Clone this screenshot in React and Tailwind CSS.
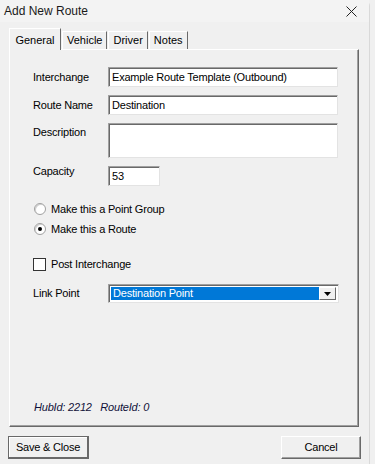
import React from "react";

const tabs = ["General", "Vehicle", "Driver", "Notes"];

const sunken =
  "bg-white border border-t-[#a0a0a0] border-l-[#a0a0a0] border-r-[#e3e3e3] border-b-[#e3e3e3] shadow-[inset_1px_1px_0_#696969]";

const Field = ({ label, value, className = "" }) => (
  <div className="flex items-center mt-[8px]">
    <span className="w-[75px] shrink-0">{label}</span>
    <div className={`${sunken} h-[20px] w-[230px] flex items-center pl-[3px] ${className}`}>
      {value}
    </div>
  </div>
);

const Radio = ({ label, checked }) => (
  <div className="flex items-center h-[20px]">
    <span className="w-[12px] h-[12px] rounded-full border border-[#a0a0a0] bg-white flex items-center justify-center ml-[1px] shadow-[inset_1px_1px_0_#d0d0d0]">
      {checked && <span className="w-[4px] h-[4px] rounded-full bg-black" />}
    </span>
    <span className="ml-[5px]">{label}</span>
  </div>
);

export default function App() {
  return (
    <div className="w-[375px] h-[464px] bg-[#f0f0f0] font-['Liberation_Sans',Arial,sans-serif] text-[11px] text-black overflow-hidden">
      <div className="w-[370px] h-full border-r border-[#d9d9d9] rounded-tr-[6px] flex flex-col">
        {/* title bar */}
        <div className="h-[22px] bg-[#f3f3f3] flex items-center justify-between pl-[4px] pr-[12px] text-[12px] text-[#1a1a1a]">
          <span>Add New Route</span>
          <svg width="11" height="11" viewBox="0 0 11 11">
            <path d="M0.5 0.5 L10.5 10.5 M10.5 0.5 L0.5 10.5" stroke="#222" strokeWidth="1" />
          </svg>
        </div>

        {/* tabs */}
        <div className="flex items-end h-[21px] mt-[6px] ml-[10px] relative z-10">
          {tabs.map((t, i) =>
            i === 0 ? (
              <div
                key={t}
                className="h-[22px] -mb-[1px] w-[52px] bg-[#f0f0f0] border-t border-l border-white border-r border-r-[#696969] flex items-start justify-center pt-[3px] -ml-[1px]"
              >
                {t}
              </div>
            ) : (
              <div
                key={t}
                className="h-[18px] border-t border-l border-white border-r border-r-[#696969] flex items-center px-[4px] ml-[1px]"
              >
                {t}
              </div>
            )
          )}
        </div>

        {/* panel */}
        <div className="ml-[9px] w-[350px] h-[378px] border-t border-l border-white border-r border-b border-r-[#696969] border-b-[#696969] shadow-[inset_-1px_-1px_0_#a0a0a0] flex flex-col pl-[23px] pt-[9px] tracking-[-0.2px]">
          <Field label="Interchange" value="Example Route Template (Outbound)" />
          <Field label="Route Name" value="Destination" />
          <div className="flex items-start mt-[8px]">
            <span className="w-[75px] shrink-0 mt-[1px]">Description</span>
            <div className={`${sunken} h-[35px] w-[230px]`} />
          </div>
          <div className="flex items-start mt-[8px]">
            <span className="w-[75px] shrink-0 -mt-[3px]">Capacity</span>
            <div className={`${sunken} h-[20px] w-[52px] flex items-center pl-[3px] pt-[1px]`}>53</div>
          </div>

          <div className="mt-[13px]">
            <Radio label="Make this a Point Group" />
            <Radio label="Make this a Route" checked />
          </div>

          <div className="flex items-center h-[20px] mt-[15px]">
            <span className="w-[13px] h-[13px] border border-[#333] bg-white" />
            <span className="ml-[5px]">Post Interchange</span>
          </div>

          <div className="flex items-center mt-[10px]">
            <span className="w-[75px] shrink-0">Link Point</span>
            <div className={`${sunken} h-[19px] w-[231px] flex p-[2px]`}>
              <div className="flex-1 bg-[#0078d7] text-white flex items-center pl-[2px]">Destination Point</div>
              <div className="w-[17px] bg-[#f0f0f0] border border-t-white border-l-white border-r-[#696969] border-b-[#696969] flex items-center justify-center">
                <svg width="7" height="4" viewBox="0 0 7 4">
                  <path d="M0 0 H7 L3.5 4 Z" fill="#000" />
                </svg>
              </div>
            </div>
          </div>

          <div className="mt-auto pb-[11px] pl-[1px] italic text-[#10103a]">
            HubId: 2212&nbsp;&nbsp;&nbsp;RouteId: 0
          </div>
        </div>

        {/* buttons */}
        <div className="flex justify-between mt-[9px] pl-[8px] pr-[8px]">
          <button className="w-[81px] h-[23px] bg-[#f0f0f0] border border-[#696969] border-r-2 border-b-2 shadow-[inset_1px_1px_0_#fff] text-[11px] tracking-[-0.2px]">
            Save &amp; Close
          </button>
          <button className="w-[80px] h-[23px] bg-[#f0f0f0] border border-t-white border-l-white border-r-[#696969] border-b-[#696969] shadow-[inset_-1px_-1px_0_#a0a0a0] text-[11px] tracking-[-0.2px]">
            Cancel
          </button>
        </div>
      </div>
    </div>
  );
}
